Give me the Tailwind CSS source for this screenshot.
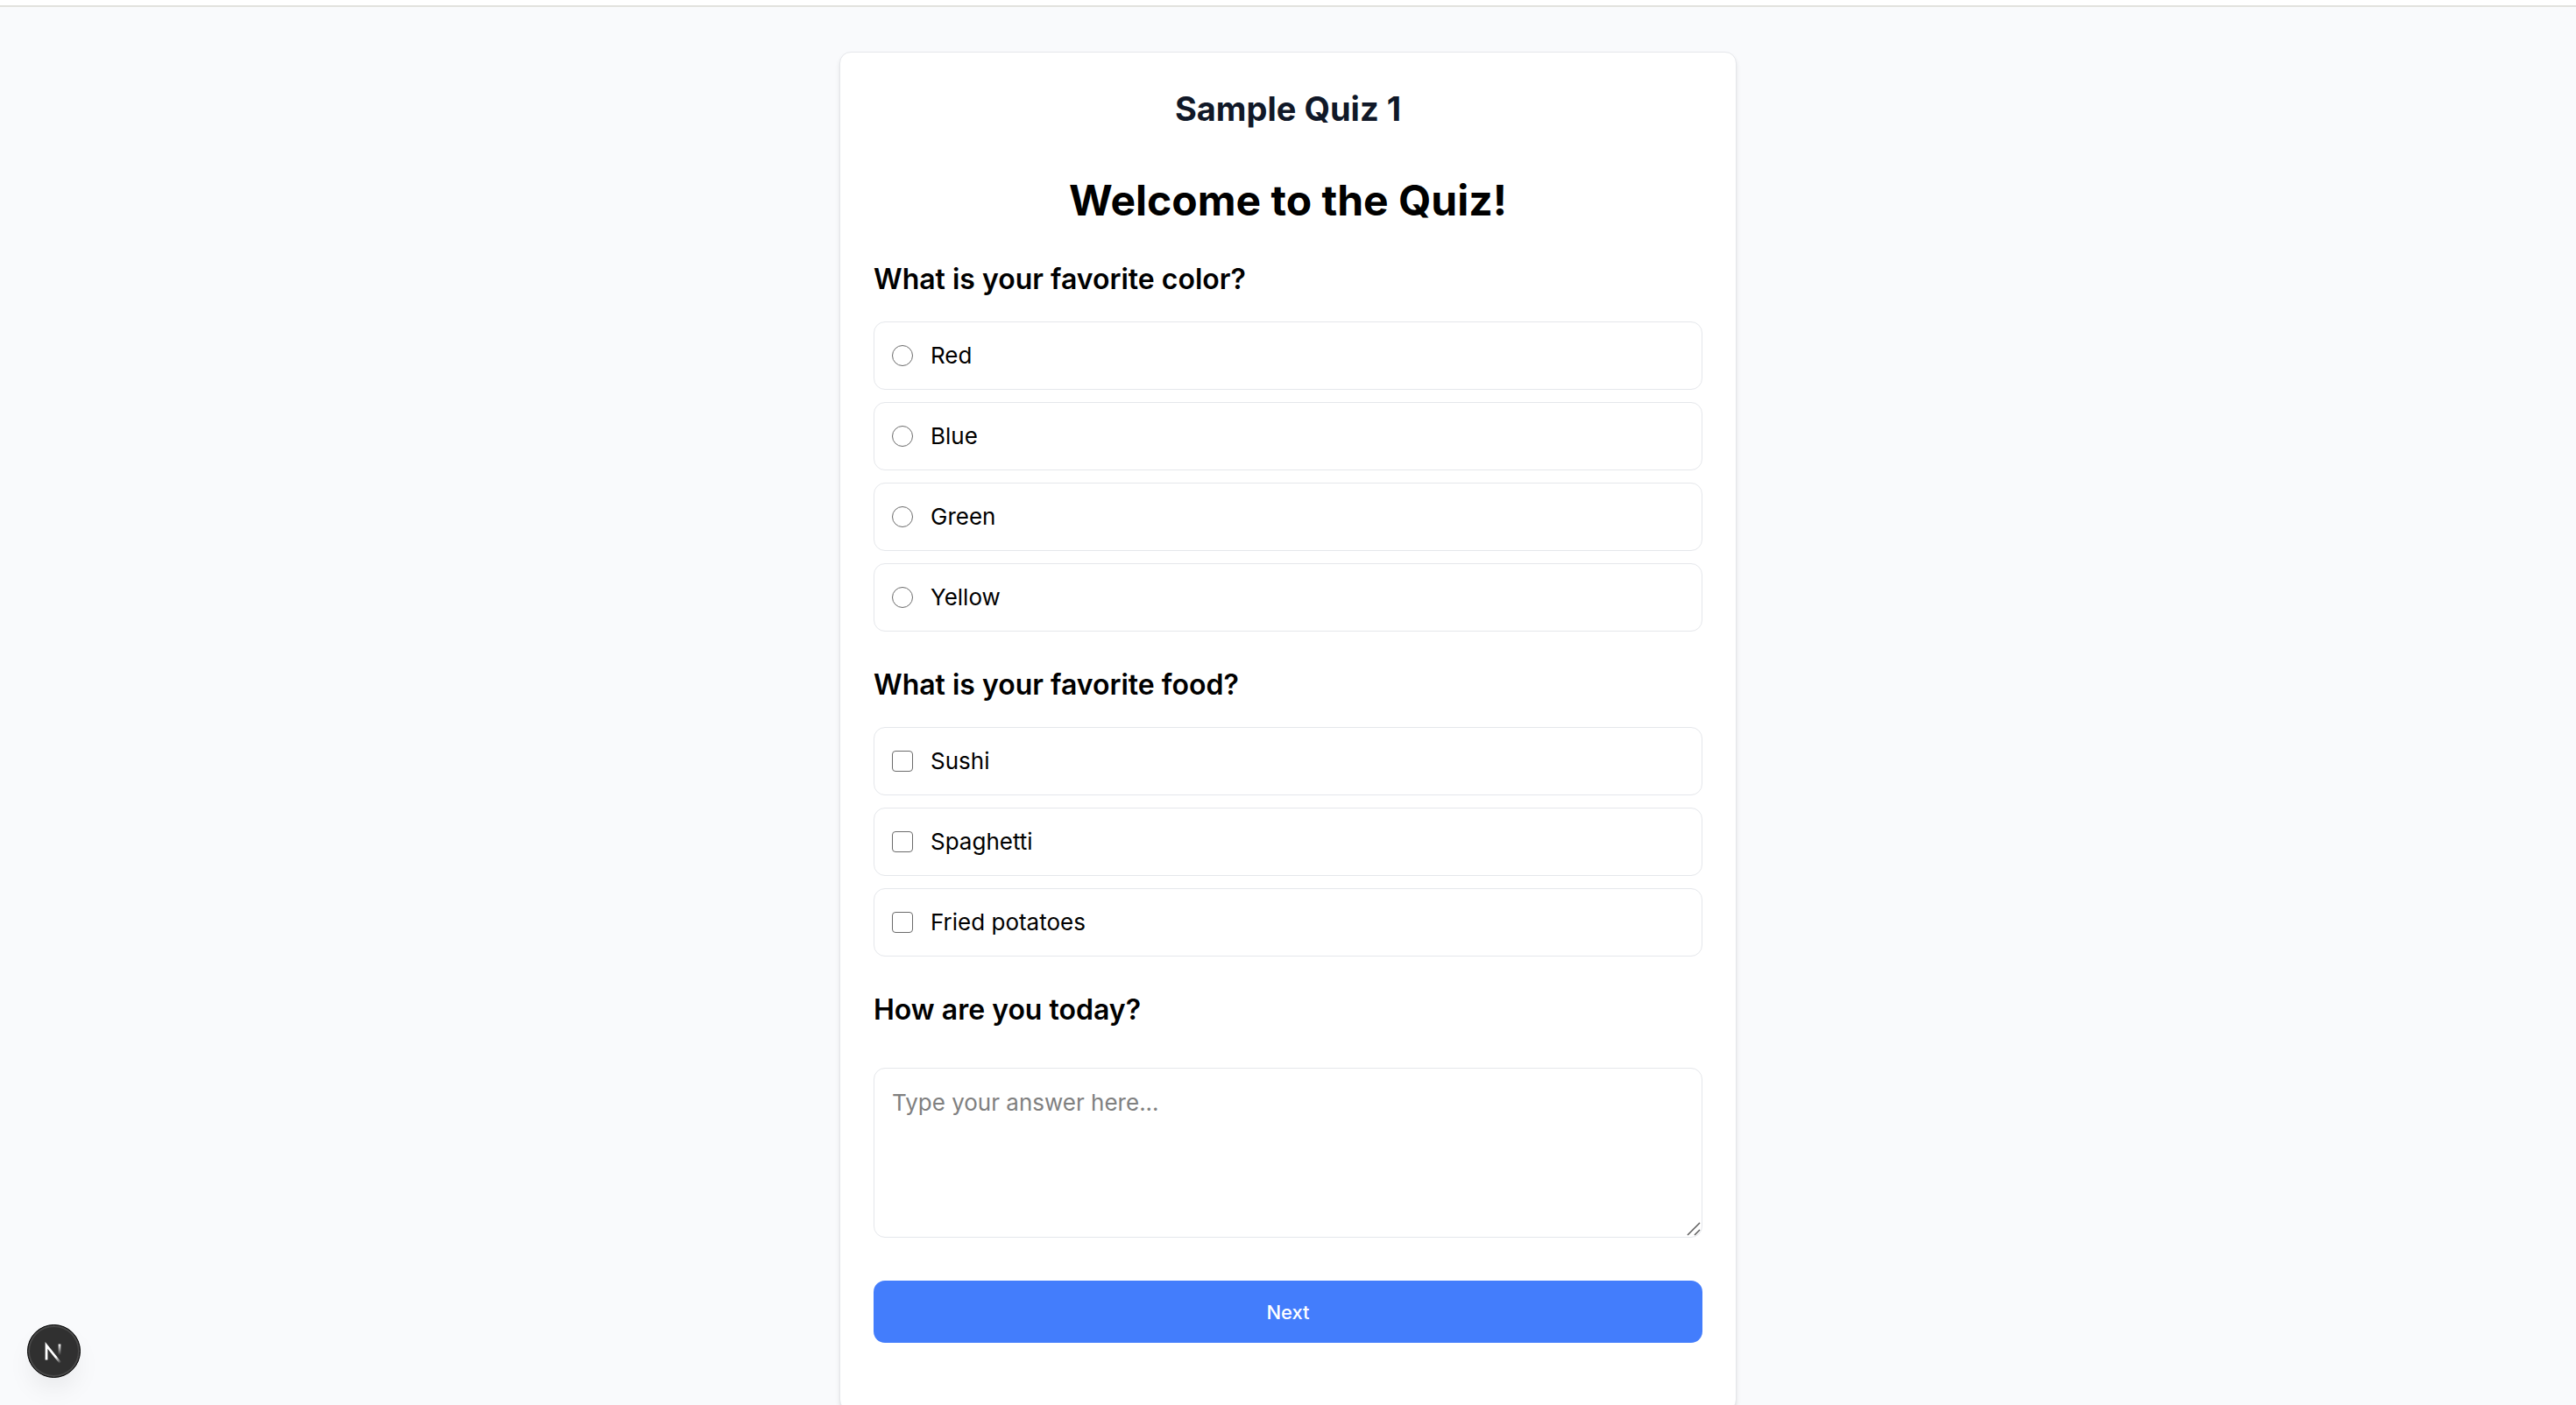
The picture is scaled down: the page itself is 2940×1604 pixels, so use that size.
<!DOCTYPE html>
<html lang="en">
<head>
<meta charset="utf-8">
<meta name="viewport" content="width=device-width, initial-scale=1">
<title>Sample Quiz 1</title>
<script src="https://cdn.jsdelivr.net/npm/@tailwindcss/browser@4"></script>
</head>
<body class="h-screen overflow-y-auto [scrollbar-width:none] bg-[#f9fafc] font-['Inter',sans-serif] text-[26px] leading-[38px] text-black">
<header class="h-2 border-b-2 border-[#e2e2de] bg-white"></header>
<main class="px-6 pt-[51px] pb-12">
  <section class="mx-auto max-w-5xl rounded-[13px] border border-gray-200 bg-white px-[38px] pt-[38px] pb-[77px] shadow-md">
    <h1 class="text-center text-[38px] leading-[52px] font-bold text-gray-900">Sample Quiz 1</h1>
    <form class="mt-[50px] flex flex-col gap-[38px]">
      <h2 class="text-center text-5xl leading-[58px] font-bold">Welcome to the Quiz!</h2>
      <fieldset>
        <legend class="mb-[26px] text-[32px] leading-[45px] font-semibold">What is your favorite color?</legend>
        <div class="flex flex-col gap-[14px]">
          <label class="flex items-center gap-5 rounded-[13px] border border-gray-200 px-5 py-[19px]"><input type="radio" name="color" value="red" class="size-6 appearance-none rounded-full border border-[#6b6b6b] checked:border-8 checked:border-[#437dfc]">Red</label>
          <label class="flex items-center gap-5 rounded-[13px] border border-gray-200 px-5 py-[19px]"><input type="radio" name="color" value="blue" class="size-6 appearance-none rounded-full border border-[#6b6b6b] checked:border-8 checked:border-[#437dfc]">Blue</label>
          <label class="flex items-center gap-5 rounded-[13px] border border-gray-200 px-5 py-[19px]"><input type="radio" name="color" value="green" class="size-6 appearance-none rounded-full border border-[#6b6b6b] checked:border-8 checked:border-[#437dfc]">Green</label>
          <label class="flex items-center gap-5 rounded-[13px] border border-gray-200 px-5 py-[19px]"><input type="radio" name="color" value="yellow" class="size-6 appearance-none rounded-full border border-[#6b6b6b] checked:border-8 checked:border-[#437dfc]">Yellow</label>
        </div>
      </fieldset>
      <fieldset>
        <legend class="mb-[26px] text-[32px] leading-[45px] font-semibold">What is your favorite food?</legend>
        <div class="flex flex-col gap-[14px]">
          <label class="flex items-center gap-5 rounded-[13px] border border-gray-200 px-5 py-[19px]"><input type="checkbox" name="food" value="sushi" class="size-6 appearance-none rounded border border-[#6b6b6b] checked:border-[#437dfc] checked:bg-[#437dfc]">Sushi</label>
          <label class="flex items-center gap-5 rounded-[13px] border border-gray-200 px-5 py-[19px]"><input type="checkbox" name="food" value="spaghetti" class="size-6 appearance-none rounded border border-[#6b6b6b] checked:border-[#437dfc] checked:bg-[#437dfc]">Spaghetti</label>
          <label class="flex items-center gap-5 rounded-[13px] border border-gray-200 px-5 py-[19px]"><input type="checkbox" name="food" value="potatoes" class="size-6 appearance-none rounded border border-[#6b6b6b] checked:border-[#437dfc] checked:bg-[#437dfc]">Fried potatoes</label>
        </div>
      </fieldset>
      <div>
        <label for="mood" class="block text-[32px] leading-[45px] font-semibold">How are you today?</label>
        <div class="relative mt-11">
          <textarea id="mood" name="mood" placeholder="Type your answer here..." class="block h-[194px] w-full resize-none rounded-[13px] border border-gray-200 px-5 py-5 placeholder:text-[#808080]"></textarea>
          <svg class="pointer-events-none absolute right-0.5 bottom-0.5 size-4" viewBox="0 0 16 16" fill="none" stroke="#5c5c5c" stroke-width="1.5" aria-hidden="true"><path d="M1 15 15 1M9 15l6-6"/></svg>
        </div>
      </div>
      <button type="submit" class="mt-[11px] h-[71px] w-full rounded-[13px] bg-[#437dfc] text-[22px] leading-8 font-medium text-white">Next</button>
    </form>
  </section>
</main>
<button type="button" aria-label="Open developer tools" class="fixed bottom-[31px] left-[31px] grid size-[61px] place-items-center rounded-full border border-black bg-[#303030] shadow-[inset_0_0_0_2px_#484848,0_16px_32px_-8px_rgb(0_0_0/0.1)]">
  <svg class="size-7" viewBox="0 0 28 28" fill="none" aria-hidden="true">
    <defs>
      <linearGradient id="stem" x1="0" y1="5" x2="0" y2="18" gradientUnits="userSpaceOnUse"><stop stop-color="#fff"/><stop offset="1" stop-color="#fff" stop-opacity="0"/></linearGradient>
      <linearGradient id="slash" x1="16" y1="20" x2="21" y2="27" gradientUnits="userSpaceOnUse"><stop stop-color="#fff"/><stop offset="1" stop-color="#fff" stop-opacity="0"/></linearGradient>
    </defs>
    <path d="M20 5.500v13" stroke="url(#stem)" stroke-width="2.800"/>
    <path d="M5 23.500V7L21 27" stroke="url(#slash)" stroke-width="2.800"/>
  </svg>
</button>
</body>
</html>
